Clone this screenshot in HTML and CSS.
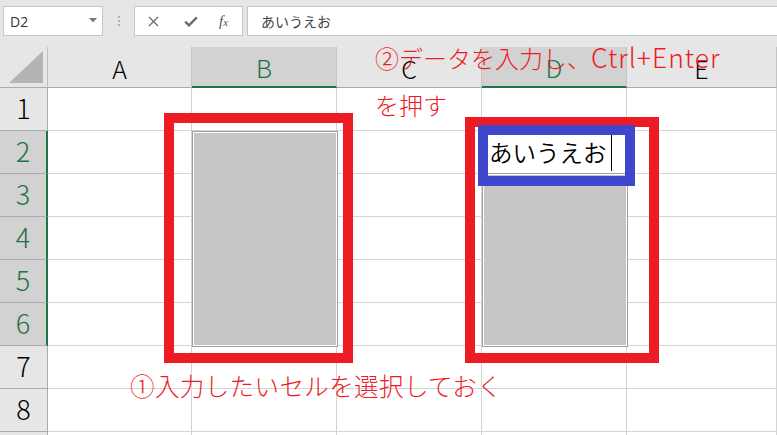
FILE: index.html
```html
<!DOCTYPE html>
<html lang="ja">
<head>
<meta charset="utf-8">
<title>Excel</title>
<link rel="stylesheet" href="styles.css">
</head>
<body>
<div class="app">
  <div class="toolbar">
    <div class="namebox">
      <span class="nb-text">D2</span>
      <svg class="nb-arrow" width="8" height="5" viewBox="0 0 8 5"><polygon points="0,0 8,0 4,4.5" fill="#7b7b7b"/></svg>
    </div>
    <div class="dots"><i></i><i></i><i></i></div>
    <div class="fbtns">
      <svg width="11" height="11" viewBox="0 0 11 11"><path d="M1 1 L10 10 M10 1 L1 10" stroke="#6f6f6f" stroke-width="1.4" fill="none"/></svg>
      <svg width="14" height="11" viewBox="0 0 14 11"><path d="M1.2 5.6 L5 9.4 L12.8 1.4" stroke="#6a6a6a" stroke-width="2.3" fill="none"/></svg>
      <span class="fx">f<span class="fx-x">x</span></span>
    </div>
    <div class="formula">あいうえお</div>
  </div>

  <div class="sheet">
    <div class="corner"><svg width="35" height="33" viewBox="0 0 35 33"><polygon points="34,0 34,32 0,32" fill="#b4b4b4"/></svg></div>
    <div class="ch">A</div>
    <div class="ch sel">B</div>
    <div class="ch">C</div>
    <div class="ch sel">D</div>
    <div class="ch">E</div>

    <div class="rh">1</div><div class="c"></div><div class="c"></div><div class="c"></div><div class="c"></div><div class="c"></div>
    <div class="rh sel">2</div><div class="c"></div><div class="c"></div><div class="c"></div><div class="c active">あいうえお<span class="caret"></span></div><div class="c"></div>
    <div class="rh sel">3</div><div class="c"></div><div class="c"></div><div class="c"></div><div class="c"></div><div class="c"></div>
    <div class="rh sel">4</div><div class="c"></div><div class="c"></div><div class="c"></div><div class="c"></div><div class="c"></div>
    <div class="rh sel">5</div><div class="c"></div><div class="c"></div><div class="c"></div><div class="c"></div><div class="c"></div>
    <div class="rh sel">6</div><div class="c"></div><div class="c"></div><div class="c"></div><div class="c"></div><div class="c"></div>
    <div class="rh">7</div><div class="c"></div><div class="c"></div><div class="c"></div><div class="c"></div><div class="c"></div>
    <div class="rh">8</div><div class="c"></div><div class="c"></div><div class="c"></div><div class="c"></div><div class="c"></div>
    <div class="rh"></div><div class="c"></div><div class="c"></div><div class="c"></div><div class="c"></div><div class="c"></div>

    <div class="selection sel-b"></div>
    <div class="selection sel-d"></div>
  </div>

  <div class="mark red mark-b"></div>
  <div class="mark red mark-d"></div>
  <div class="mark blue mark-edit"></div>

  <div class="note note-2">②データを入力し、<span class="latin">Ctrl+Enter</span><br>を押す</div>
  <div class="note note-1">①入力したいセルを選択しておく</div>
</div>
</body>
</html>
```

FILE: styles.css
```css
* { box-sizing: border-box; }

body {
  margin: 0;
  background: #ffffff;
  font-family: "Noto Sans CJK JP", "Noto Sans", sans-serif;
}

.app {
  position: relative;
  width: 777px;
  height: 435px;
  overflow: hidden;
  background: #e6e6e6;
}

/* ---------- formula bar ---------- */
.toolbar {
  display: flex;
  align-items: center;
  height: 47px;
  padding: 6px 0 11px 3px;
}

.namebox {
  width: 100px;
  height: 30px;
  background: #fff;
  border: 1px solid #c6c6c6;
  display: flex;
  align-items: center;
  justify-content: space-between;
  padding: 0 5px 0 6px;
}

.nb-text {
  font-family: "Open Sans", "Liberation Sans", sans-serif;
  font-size: 14px;
  color: #333;
}

.nb-arrow { margin-bottom: 2px; }

.dots {
  width: 31px;
  height: 30px;
  display: flex;
  flex-direction: column;
  align-items: center;
  justify-content: center;
  gap: 2px;
}

.dots i {
  display: block;
  width: 2px;
  height: 2px;
  background: #b0b0b0;
}

.fbtns {
  width: 109px;
  height: 30px;
  background: #fff;
  border: 1px solid #c6c6c6;
  display: flex;
  align-items: center;
  padding: 0 0 0 13px;
}

.fbtns svg:nth-child(1) { margin-right: 25px; }
.fbtns svg:nth-child(2) { margin-right: 21px; }

.fx {
  font-family: "Liberation Serif", serif;
  font-style: italic;
  font-size: 15px;
  color: #555;
  line-height: 1;
}

.fx-x { font-size: 11px; }

.formula {
  flex: 1;
  height: 30px;
  margin-left: 4px;
  background: #fff;
  border: 1px solid #c6c6c6;
  border-right: none;
  padding-left: 13px;
  display: flex;
  align-items: center;
  font-size: 14px;
  color: #444;
}

/* ---------- sheet ---------- */
.sheet {
  position: relative;
  display: grid;
  grid-template-columns: 48px 144px 145px 145px 145px 150px;
  grid-template-rows: 41px repeat(9, 43px);
}

.corner {
  background: #e6e6e6;
  border-right: 1px solid #c0c0c0;
  border-bottom: 1px solid #ababab;
  display: flex;
  align-items: flex-end;
  justify-content: flex-end;
  padding: 0 3px 3px 0;
}

.ch {
  background: #e6e6e6;
  border-right: 1px solid #c4c4c4;
  border-bottom: 1px solid #ababab;
  display: flex;
  align-items: center;
  justify-content: center;
  font-size: 25px;
  font-weight: 300;
  color: #000;
  padding-top: 1px;
}

.ch.sel {
  background: #d2d2d2;
  color: #217346;
  border-bottom: 2px solid #217346;
}

.rh {
  background: #e6e6e6;
  border-right: 1px solid #ababab;
  border-bottom: 1px solid #ababab;
  display: flex;
  align-items: center;
  justify-content: center;
  font-size: 27px;
  font-weight: 300;
  color: #000;
  padding-bottom: 3px;
}

.rh.sel {
  background: #d2d2d2;
  color: #217346;
  border-right: 2px solid #217346;
}

.c {
  background: #fff;
  border-right: 1px solid #d4d4d4;
  border-bottom: 1px solid #d4d4d4;
}

.c.active {
  display: flex;
  align-items: center;
  padding-left: 7px;
  font-size: 23.5px;
  font-weight: 350;
  color: #000;
  white-space: nowrap;
  border-bottom-color: #a0a0a0;
}

.caret {
  display: inline-block;
  width: 1px;
  height: 38px;
  background: #000;
  margin-left: 4px;
}

.selection {
  position: absolute;
  background: #c6c6c6;
  border: 1px solid #a0a0a0;
  box-shadow: inset 0 0 0 1px #ffffff;
}

.sel-b { left: 192px; top: 84px; width: 146px; height: 216px; }
.sel-d { left: 482px; top: 126px; width: 146px; height: 174px; }

/* ---------- annotations ---------- */
.mark {
  position: absolute;
  border: 10px solid;
}

.red { border-color: #ed1c24; }
.blue { border-color: #3f48cc; }

.mark-b { left: 164px; top: 113px; width: 189px; height: 250px; }
.mark-d { left: 465px; top: 117px; width: 194px; height: 246px; }
.mark-edit { left: 478px; top: 125px; width: 157px; height: 61px; }

.note {
  position: absolute;
  color: #ed1c24;
  font-size: 24px;
  font-weight: 300;
  white-space: nowrap;
}

.note-2 { left: 375px; top: 33px; line-height: 47px; }
.note-1 { left: 130px; top: 371px; line-height: 30px; font-size: 24.5px; letter-spacing: 0.4px; }

.latin {
  font-size: 26.5px;
  letter-spacing: 1px;
}
```
